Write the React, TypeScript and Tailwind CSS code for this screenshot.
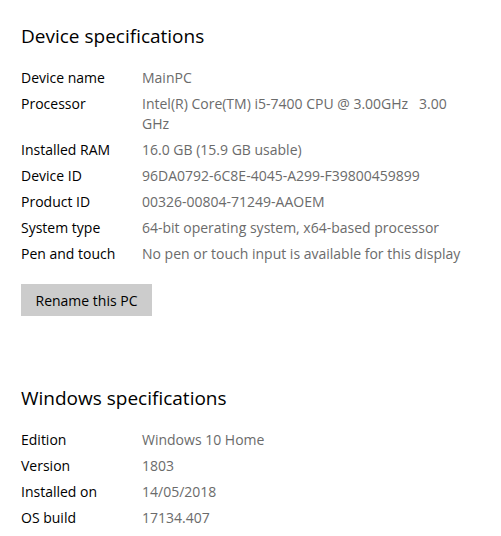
import React from "react";

type Spec = { label: string; value: string };

const deviceSpecs: Spec[] = [
  { label: "Device name", value: "MainPC" },
  { label: "Processor", value: "Intel(R) Core(TM) i5-7400 CPU @ 3.00GHz\u00a0\u00a0 3.00 GHz" },
  { label: "Installed RAM", value: "16.0 GB (15.9 GB usable)" },
  { label: "Device ID", value: "96DA0792-6C8E-4045-A299-F39800459899" },
  { label: "Product ID", value: "00326-00804-71249-AAOEM" },
  { label: "System type", value: "64-bit operating system, x64-based processor" },
  { label: "Pen and touch", value: "No pen or touch input is available for this display" },
];

const windowsSpecs: Spec[] = [
  { label: "Edition", value: "Windows 10 Home" },
  { label: "Version", value: "1803" },
  { label: "Installed on", value: "14/05/2018" },
  { label: "OS build", value: "17134.407" },
];

// one label / value row
function SpecRow({ label, value }: Spec) {
  return (
    <div className="flex text-[14px] leading-[20px]">
      <div className="w-[121px] shrink-0 text-black">{label}</div>
      <div className="w-[330px] text-[#6b6b6b]">{value}</div>
    </div>
  );
}

export default function App() {
  return (
    <div
      className="w-[501px] h-[536px] bg-white px-[21px] pt-[23px] overflow-hidden"
      style={{ fontFamily: '"Open Sans", "Noto Sans", sans-serif' }}
    >
      {/* Device specifications */}
      <h2 className="text-[19px] leading-[26px] text-black">Device specifications</h2>
      <div className="mt-[19px] flex flex-col gap-[6px]">
        {deviceSpecs.map((s) => (
          <SpecRow key={s.label} {...s} />
        ))}
      </div>
      <button className="mt-[20px] h-[32px] w-[131px] bg-[#cccccc] text-[14px] text-black">
        Rename this PC
      </button>

      {/* Windows specifications */}
      <h2 className="mt-[69px] text-[19px] leading-[26px] text-black">Windows specifications</h2>
      <div className="mt-[19px] flex flex-col gap-[6px]">
        {windowsSpecs.map((s) => (
          <SpecRow key={s.label} {...s} />
        ))}
      </div>
    </div>
  );
}
